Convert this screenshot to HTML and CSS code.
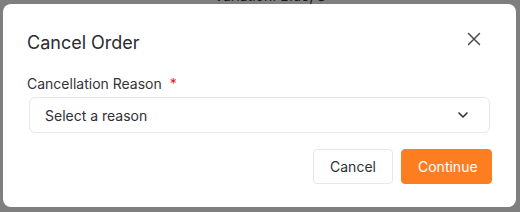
FILE: index.html
```html
<!DOCTYPE html>
<html>
<head>
<meta charset="utf-8">
<link rel="stylesheet" href="styles.css">
</head>
<body>
<div class="page">
  <div class="page-line">Variation: Blue, S</div>
</div>
<div class="overlay">
  <div class="modal" role="dialog" aria-labelledby="t">
    <div class="modal-head">
      <h2 class="modal-title" id="t">Cancel Order</h2>
      <button class="close" aria-label="Close">
        <svg width="14" height="14" viewBox="0 0 14 14" fill="none" stroke="currentColor" stroke-width="1.5" stroke-linecap="round"><path d="M1.5 1.5L12.5 12.5M12.5 1.5L1.5 12.5"/></svg>
      </button>
    </div>
    <label class="field-label">Cancellation Reason <span class="req">*</span></label>
    <div class="select">
      <span>Select a reason</span>
      <svg width="10" height="6" viewBox="0 0 10 6" fill="none" stroke="currentColor" stroke-width="1.6" stroke-linecap="round" stroke-linejoin="round"><path d="M1 1L5 5L9 1"/></svg>
    </div>
    <div class="actions">
      <button class="btn btn-secondary">Cancel</button>
      <button class="btn btn-primary">Continue</button>
    </div>
  </div>
</div>
</body>
</html>
```
FILE: styles.css
```css
* { box-sizing: border-box; }
html, body { margin: 0; padding: 0; }
body {
  width: 520px;
  height: 212px;
  overflow: hidden;
  background: #ffffff;
  font-family: Inter, "Noto Sans", sans-serif;
}
.page {
  margin-top: -13px;
  padding-left: 214px;
}
.page-line {
  font-size: 14px;
  line-height: 18px;
  color: #333;
}
.overlay {
  position: fixed;
  inset: 0;
  background: rgba(0, 0, 0, 0.5);
  display: flex;
  padding: 4px 4px 5px 3px;
}
.modal {
  flex: 1;
  background: #fff;
  border-radius: 8px;
  padding: 25px 24px 23px 24px;
  display: flex;
  flex-direction: column;
}
.modal-head {
  display: flex;
  justify-content: space-between;
  align-items: flex-start;
}
.modal-title {
  margin: 0;
  font-size: 18px;
  line-height: 28px;
  font-weight: 400;
  color: #2b2b30;
}
.close {
  border: 0;
  background: none;
  padding: 0;
  margin: 2px 10px 0 0;
  width: 16px;
  height: 16px;
  display: flex;
  align-items: center;
  justify-content: center;
  color: #4a4a50;
}
.field-label {
  margin-top: 17px;
  font-size: 14px;
  line-height: 20px;
  color: #333338;
}
.req {
  color: #e02424;
  margin-left: 4px;
}
.select {
  margin: 3px 2px 0 2px;
  height: 36px;
  border: 1px solid #e6e7ea;
  border-radius: 6px;
  padding: 0 21px 0 15px;
  display: flex;
  align-items: center;
  justify-content: space-between;
  font-size: 14px;
  color: #2f2f35;
}
.select svg { color: #333; }
.actions {
  margin-top: 16px;
  display: flex;
  justify-content: flex-end;
  gap: 8px;
}
.btn {
  height: 35px;
  padding: 0 16px;
  border-radius: 4px;
  font-family: inherit;
  font-size: 14px;
  line-height: 20px;
}
.btn-secondary {
  width: 80px;
  background: #fff;
  border: 1px solid #e6e7ea;
  color: #2f2f35;
}
.btn-primary {
  width: 91px;
  background: #fd7e21;
  border: 1px solid #fd7e21;
  color: #fff;
}
```
